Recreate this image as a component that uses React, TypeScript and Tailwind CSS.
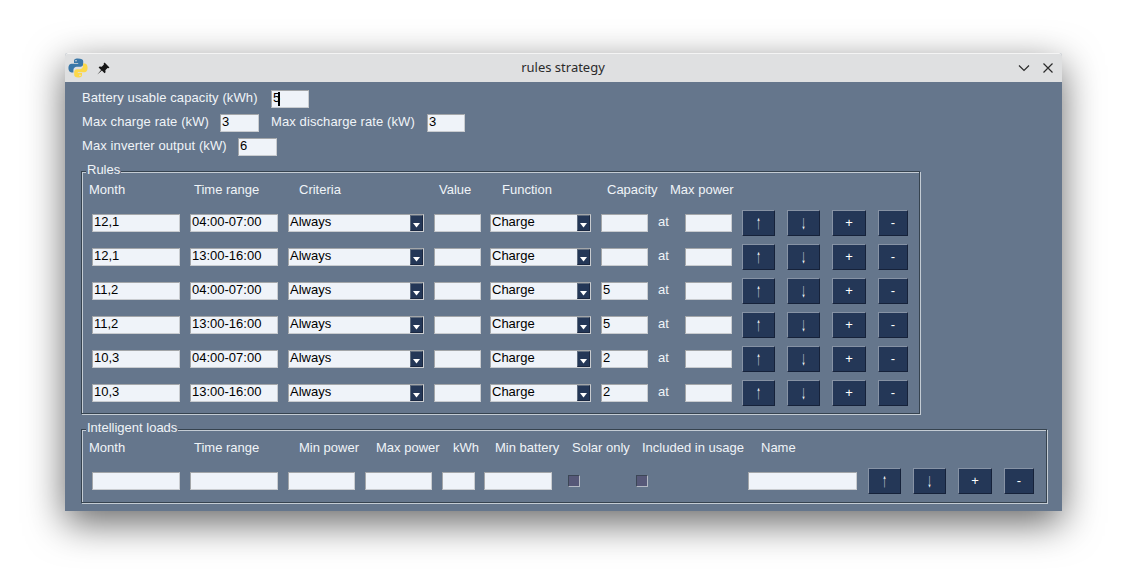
const FONT = "font-['Liberation_Sans',Arial,sans-serif]";

const RULES = [
  { month: '12,1', time: '04:00-07:00', capacity: '' },
  { month: '12,1', time: '13:00-16:00', capacity: '' },
  { month: '11,2', time: '04:00-07:00', capacity: '5' },
  { month: '11,2', time: '13:00-16:00', capacity: '5' },
  { month: '10,3', time: '04:00-07:00', capacity: '2' },
  { month: '10,3', time: '13:00-16:00', capacity: '2' },
];

const RULE_HEADERS = [
  { label: 'Month', w: 'w-[105px]' },
  { label: 'Time range', w: 'w-[105px]' },
  { label: 'Criteria', w: 'w-[140px]' },
  { label: 'Value', w: 'w-[63px]' },
  { label: 'Function', w: 'w-[105px]' },
  { label: 'Capacity', w: 'w-[63px]' },
  { label: 'Max power', w: 'w-[80px]' },
];

const LOAD_HEADERS = [
  { label: 'Month', w: 'w-[105px]' },
  { label: 'Time range', w: 'w-[105px]' },
  { label: 'Min power', w: 'w-[77px]' },
  { label: 'Max power', w: 'w-[77px]' },
  { label: 'kWh', w: 'w-[42px]' },
  { label: 'Min battery', w: 'w-[77px]' },
  { label: 'Solar only', w: 'w-[70px]' },
  { label: 'Included in usage', w: 'w-[119px]' },
  { label: 'Name', w: 'w-[60px]' },
];

function Field({ value = '', className = '' }: { value?: string; className?: string }) {
  return (
    <div
      className={`h-[18px] shrink-0 bg-[#eff3f9] border border-t-[#a3a6a9] border-l-[#a3a6a9] border-r-[#c9ccd0] border-b-[#c9ccd0] pl-[1px] text-[13px] leading-[14px] text-black whitespace-pre ${className}`}
    >
      {value}
    </div>
  );
}

function Combo({ value, className = '' }: { value: string; className?: string }) {
  return (
    <div
      className={`relative h-[18px] shrink-0 bg-[#eff3f9] border border-t-[#a3a6a9] border-l-[#a3a6a9] border-r-[#c9ccd0] border-b-[#c9ccd0] pl-[1px] text-[13px] leading-[14px] text-black ${className}`}
    >
      {value}
      <div className="absolute right-0 top-0 bottom-0 w-[13px] bg-[#243757] border border-t-[#5f6c7e] border-l-[#5f6c7e] border-r-[#1a2740] border-b-[#1a2740] flex items-end justify-center pb-[2px]">
        <svg width="7" height="5" viewBox="0 0 7 5">
          <path d="M0 0h7L3.500 4.500z" fill="#fff" />
        </svg>
      </div>
    </div>
  );
}

function ToolButton({ label, className = '', glyphClass = '' }: { label: string; className?: string; glyphClass?: string }) {
  return (
    <div
      className={`h-[26px] shrink-0 flex items-center justify-center bg-[#243757] border border-t-[#8793a5] border-l-[#8793a5] border-r-[#16223a] border-b-[#16223a] text-white ${className}`}
    >
      <span className={glyphClass}>{label}</span>
    </div>
  );
}

function RowButtons({ className = '' }: { className?: string }) {
  return (
    <div className={`flex items-center ${className}`}>
      <ToolButton label="↑" className="w-[33px] text-[14px]" glyphClass="scale-x-[0.6] scale-y-[1.4] -mt-[1px]" />
      <ToolButton label="↓" className="w-[33px] ml-[12px] text-[14px]" glyphClass="scale-x-[0.6] scale-y-[1.4] -mt-[1px]" />
      <ToolButton label="+" className="w-[34px] ml-[12px] text-[13px]" />
      <ToolButton label="-" className="w-[30px] ml-[12px] text-[13px]" />
    </div>
  );
}

function Group({ title, className = '', children }: { title: string; className?: string; children: React.ReactNode }) {
  return (
    <div
      className={`relative border border-[#36434f] shadow-[1px_1px_0_#c4ccd4,inset_1px_1px_0_#c4ccd4] ${className}`}
    >
      <div className="absolute left-[4px] top-[-10px] bg-[#65768c] px-[1px] text-[13px] leading-[16px] text-[#f0f4f8]">
        {title}
      </div>
      {children}
    </div>
  );
}

function Headers({ items, height }: { items: { label: string; w: string }[]; height: string }) {
  return (
    <div className={`flex items-center pl-[7px] pt-[1px] text-[13px] text-[#f0f4f8] ${height}`}>
      {items.map((h) => (
        <div key={h.label} className={`shrink-0 whitespace-nowrap ${h.w}`}>
          {h.label}
        </div>
      ))}
    </div>
  );
}

function PythonLogo() {
  return (
    <svg width="20" height="20" viewBox="0 0 20 20">
      <path
        d="M9.800 .5C6.500 .5 6 1.800 6 3.200V5h4.200v.8H3.700C1.800 5.800 .4 7.300 .4 10.100s1.400 4.300 3 4.300h2V12c0-1.900 1.500-3.300 3.300-3.300h3.800c1.500 0 2.700-1.200 2.700-2.700V3.200C15.200 1.500 13.400 .5 9.800 .5z"
        fill="#3b78a8"
      />
      <circle cx="8" cy="2.800" r=".8" fill="#dfe0e1" />
      <path
        d="M10.200 19.500c3.300 0 3.800-1.300 3.800-2.700V15H9.800v-.8h6.500c1.900 0 3.300-1.500 3.300-4.300s-1.400-4.300-3-4.300h-1.600V8c0 1.900-1.500 3.300-3.300 3.300H8.900c-1.500 0-2.700 1.200-2.700 2.700v2.800c0 1.700 1.400 2.700 4 2.700z"
        fill="#fbd84a"
      />
      <circle cx="12" cy="17.200" r=".8" fill="#dfe0e1" />
    </svg>
  );
}

function PinIcon() {
  return (
    <svg width="13" height="13" viewBox="0 0 12 12">
      <path d="M7 .5l4.500 4.500-1 .8-.8-.3-2 2 .2 2-.9.9-2.500-2.500L.6 11.400l-.1-.1 3.300-4L1.500 5l.9-.9 2 .2 2-2-.3-.8z" fill="#161616" />
    </svg>
  );
}

export default function App() {
  return (
    <div className={`w-[1127px] h-[588px] overflow-hidden bg-white pt-[53px] pl-[65px] ${FONT}`}>
      <div className="w-[997px] h-[458px] flex flex-col rounded-t-[3px] bg-[#65768c] shadow-[0_12px_38px_rgba(0,0,0,0.6)]">
        {/* Title bar */}
        <div className="h-[29px] shrink-0 flex items-center rounded-t-[3px] bg-[#dfe0e1] border-t border-[#f4f4f4] pl-[3px] pr-[8px]">
          <PythonLogo />
          <div className="ml-[9px]">
            <PinIcon />
          </div>
          <div className="flex-1 text-center font-['Noto_Sans',sans-serif] text-[13px] text-[#2b2b2b] pr-[2px]">
            rules strategy
          </div>
          <svg width="12" height="12" viewBox="0 0 12 12" className="mr-[12px]">
            <path d="M1 3.500l5 5 5-5" fill="none" stroke="#2b2b2b" strokeWidth="1.200" />
          </svg>
          <svg width="12" height="12" viewBox="0 0 12 12">
            <path d="M1.500 1.500l9 9m0-9l-9 9" fill="none" stroke="#2b2b2b" strokeWidth="1.200" />
          </svg>
        </div>

        {/* Body */}
        <div className="flex-1 pt-[8px] pl-[16px] text-[13px] text-[#f0f4f8]">
          <div className="flex items-center h-[18px]">
            <span className="w-[190px] shrink-0 pl-[1px] -mt-[2px] tracking-[0.1px]">Battery usable capacity (kWh)</span>
            <div className="relative">
              <Field value="5" className="w-[38px]" />
              <div className="absolute left-[7px] top-[2px] w-[2px] h-[14px] bg-black" />
            </div>
          </div>
          <div className="flex items-center h-[18px] mt-[6px]">
            <span className="w-[139px] shrink-0 pl-[1px] -mt-[2px] tracking-[0.1px]">Max charge rate (kW)</span>
            <Field value="3" className="w-[39px]" />
            <span className="w-[156px] shrink-0 ml-[12px] -mt-[2px] tracking-[0.1px]">Max discharge rate (kW)</span>
            <Field value="3" className="w-[38px]" />
          </div>
          <div className="flex items-center h-[18px] mt-[6px]">
            <span className="w-[157px] shrink-0 pl-[1px] -mt-[2px] tracking-[0.1px]">Max inverter output (kW)</span>
            <Field value="6" className="w-[39px]" />
          </div>

          <Group title="Rules" className="w-[839px] h-[243px] mt-[15px]">
            <Headers items={RULE_HEADERS} height="h-[34px]" />
            {RULES.map((r, i) => (
              <div key={i} className="flex items-center h-[34px] pl-[10px]">
                <Field value={r.month} className="w-[88px]" />
                <Field value={r.time} className="w-[88px] ml-[10px]" />
                <Combo value="Always" className="w-[136px] ml-[10px]" />
                <Field className="w-[47px] ml-[10px]" />
                <Combo value="Charge" className="w-[101px] ml-[9px]" />
                <Field value={r.capacity} className="w-[47px] ml-[10px]" />
                <span className="w-[37px] shrink-0 pl-[10px] -mt-[2px] text-[#f0f4f8]">at</span>
                <Field className="w-[47px]" />
                <RowButtons className="ml-[10px]" />
              </div>
            ))}
          </Group>

          <Group title="Intelligent loads" className="w-[966px] h-[74px] mt-[15px]">
            <Headers items={LOAD_HEADERS} height="h-[34px]" />
            <div className="flex items-center h-[34px] pl-[10px]">
              <Field className="w-[88px]" />
              <Field className="w-[88px] ml-[10px]" />
              <Field className="w-[67px] ml-[10px]" />
              <Field className="w-[67px] ml-[10px]" />
              <Field className="w-[33px] ml-[10px]" />
              <Field className="w-[68px] ml-[9px]" />
              <div className="w-[12px] h-[12px] shrink-0 ml-[16px] bg-[#565878] border border-t-[#3c4656] border-l-[#3c4656] border-r-[#b4bac4] border-b-[#b4bac4]" />
              <div className="w-[12px] h-[12px] shrink-0 ml-[56px] bg-[#565878] border border-t-[#3c4656] border-l-[#3c4656] border-r-[#b4bac4] border-b-[#b4bac4]" />
              <Field className="w-[109px] ml-[100px]" />
              <RowButtons className="ml-[11px]" />
            </div>
          </Group>
        </div>
      </div>
    </div>
  );
}
